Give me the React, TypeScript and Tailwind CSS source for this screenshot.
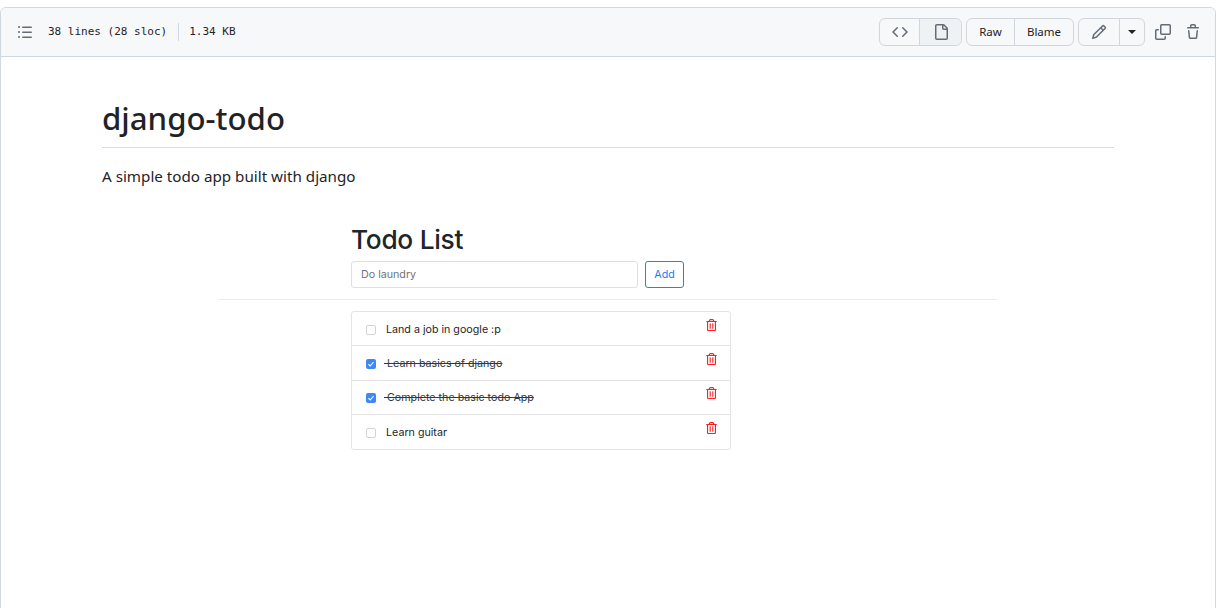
import { FaRegTrashAlt } from 'react-icons/fa';

const todos = [
  { text: 'Land a job in google :p', done: false },
  { text: 'Learn basics of django', done: true },
  { text: 'Complete the basic todo App', done: true },
  { text: 'Learn guitar', done: false },
];

function ListIcon() {
  return (
    <svg viewBox="0 0 16 16" className="h-4 w-4 fill-[#636c76]">
      <path d="M5.75 2.5h8.5a.75.75 0 0 1 0 1.5h-8.5a.75.75 0 0 1 0-1.5Zm0 5h8.5a.75.75 0 0 1 0 1.5h-8.5a.75.75 0 0 1 0-1.5Zm0 5h8.5a.75.75 0 0 1 0 1.5h-8.5a.75.75 0 0 1 0-1.5ZM2 14a1 1 0 1 1 0-2 1 1 0 0 1 0 2Zm1-6a1 1 0 1 1-2 0 1 1 0 0 1 2 0ZM2 4a1 1 0 1 1 0-2 1 1 0 0 1 0 2Z" />
    </svg>
  );
}

function CodeIcon() {
  return (
    <svg viewBox="0 0 16 16" className="h-4 w-4 fill-[#636c76]">
      <path d="m11.28 3.22 4.25 4.25a.75.75 0 0 1 0 1.06l-4.25 4.25a.749.749 0 0 1-1.06-1.06L13.94 8l-3.72-3.72a.749.749 0 0 1 1.06-1.06Zm-6.56 0a.751.751 0 0 1 1.06 1.06L2.06 8l3.72 3.72a.749.749 0 0 1-1.06 1.06L.47 8.53a.75.75 0 0 1 0-1.06Z" />
    </svg>
  );
}

function FileIcon() {
  return (
    <svg viewBox="0 0 16 16" className="h-4 w-4 fill-[#636c76]">
      <path d="M2 1.75C2 .784 2.784 0 3.75 0h6.586c.464 0 .909.184 1.237.513l2.914 2.914c.329.328.513.773.513 1.237v9.586A1.75 1.75 0 0 1 13.25 16h-9.5A1.75 1.75 0 0 1 2 14.25Zm1.75-.25a.25.25 0 0 0-.25.25v12.5c0 .138.112.25.25.25h9.5a.25.25 0 0 0 .25-.25V6h-2.75A1.75 1.75 0 0 1 9 4.25V1.5Zm6.75.062V4.25c0 .138.112.25.25.25h2.688l-.011-.013-2.914-2.914-.013-.011Z" />
    </svg>
  );
}

function PencilIcon() {
  return (
    <svg viewBox="0 0 16 16" className="h-4 w-4 fill-[#636c76]">
      <path d="M11.013 1.427a1.75 1.75 0 0 1 2.474 0l1.086 1.086a1.75 1.75 0 0 1 0 2.474l-8.61 8.61c-.21.21-.47.364-.756.445l-3.251.93a.75.75 0 0 1-.927-.928l.929-3.25c.081-.286.235-.547.445-.758l8.61-8.61Zm.176 4.823L9.75 4.81l-6.286 6.287a.253.253 0 0 0-.064.108l-.558 1.953 1.953-.558a.253.253 0 0 0 .108-.064Zm1.238-3.763a.25.25 0 0 0-.354 0L10.811 3.75l1.439 1.44 1.263-1.263a.25.25 0 0 0 0-.354Z" />
    </svg>
  );
}

function CopyIcon() {
  return (
    <svg viewBox="0 0 16 16" className="h-4 w-4 fill-[#636c76]">
      <path d="M0 6.75C0 5.784.784 5 1.75 5h1.5a.75.75 0 0 1 0 1.5h-1.5a.25.25 0 0 0-.25.25v7.5c0 .138.112.25.25.25h7.5a.25.25 0 0 0 .25-.25v-1.5a.75.75 0 0 1 1.5 0v1.5A1.75 1.75 0 0 1 9.25 16h-7.5A1.75 1.75 0 0 1 0 14.25Z" />
      <path d="M5 1.75C5 .784 5.784 0 6.75 0h7.5C15.216 0 16 .784 16 1.75v7.5A1.75 1.75 0 0 1 14.25 11h-7.5A1.75 1.75 0 0 1 5 9.25Zm1.75-.25a.25.25 0 0 0-.25.25v7.5c0 .138.112.25.25.25h7.5a.25.25 0 0 0 .25-.25v-7.5a.25.25 0 0 0-.25-.25Z" />
    </svg>
  );
}

function TrashIcon() {
  return (
    <svg viewBox="0 0 16 16" className="h-4 w-4 fill-[#636c76]">
      <path d="M11 1.75V3h2.25a.75.75 0 0 1 0 1.5H2.75a.75.75 0 0 1 0-1.5H5V1.75C5 .784 5.784 0 6.75 0h2.5C10.216 0 11 .784 11 1.75ZM4.496 6.675l.66 6.6a.25.25 0 0 0 .249.225h5.19a.25.25 0 0 0 .249-.225l.66-6.6a.75.75 0 0 1 1.492.149l-.66 6.6A1.748 1.748 0 0 1 10.595 15h-5.19a1.75 1.75 0 0 1-1.741-1.575l-.66-6.6a.75.75 0 1 1 1.492-.15ZM6.5 1.75V3h3V1.75a.25.25 0 0 0-.25-.25h-2.5a.25.25 0 0 0-.25.25Z" />
    </svg>
  );
}

function TodoRow({ text, done }: { text: string; done: boolean }) {
  return (
    <div className="flex h-[34.25px] items-center border-b border-[#e4e4e4] pl-[14px] pr-[13px] pt-[2px] last:border-b-0">
      {done ? (
        <div className="flex h-[10px] w-[10px] items-center justify-center rounded-[2px] bg-[#3f87f5]">
          <svg viewBox="0 0 10 10" className="h-[10px] w-[10px]">
            <path d="M2.4 5.2 4.2 7l3.4-4" fill="none" stroke="white" strokeWidth="1.1" />
          </svg>
        </div>
      ) : (
        <div className="h-[10px] w-[10px] rounded-[2px] border border-[#d4d4d4] bg-white" />
      )}
      <span
        className={
          done
            ? 'ml-[8px] text-[10.7px] text-[#33383d] line-through'
            : 'ml-[10px] text-[10.7px] text-[#212529]'
        }
      >
        {done ? `\u00a0${text}` : text}
      </span>
      <FaRegTrashAlt className="mb-[10px] ml-auto h-[12px] w-[11px] text-[#fa2020]" />
    </div>
  );
}

export default function App() {
  return (
    <div className="h-[608px] w-[1221px] overflow-hidden bg-white pt-[7px] font-['Noto_Sans',sans-serif] text-[#1f2328]">
      <div className="h-[640px] w-[1216px] rounded-t-md border border-[#d0d7de]">
        {/* File header */}
        <header className="flex h-[49px] items-center justify-between rounded-t-md border-b border-[#d0d7de] bg-[#f6f8fa] pl-[16px] pr-[14px]">
          <div className="flex items-center">
            <ListIcon />
            <div className="ml-[15px] flex items-center font-['DejaVu_Sans_Mono',monospace] text-[11px] text-[#1f2328]">
              <span>38 lines (28 sloc)</span>
              <span className="ml-[11px] mr-[10px] h-[18px] w-px bg-[#d0d7de]" />
              <span>1.34 KB</span>
            </div>
          </div>
          <div className="flex items-center text-[11.5px]">
            <div className="flex h-[28px] rounded-md border border-[#d0d7de]">
              <div className="flex w-[40px] items-center justify-center border-r border-[#d0d7de]">
                <CodeIcon />
              </div>
              <div className="flex w-[41px] items-center justify-center rounded-r-md bg-[#eff2f5]">
                <FileIcon />
              </div>
            </div>
            <div className="ml-[4px] flex h-[28px] rounded-md border border-[#d0d7de]">
              <div className="flex w-[48px] items-center justify-center border-r border-[#d0d7de]">Raw</div>
              <div className="flex w-[58px] items-center justify-center">Blame</div>
            </div>
            <div className="ml-[4px] flex h-[28px] rounded-md border border-[#d0d7de]">
              <div className="flex w-[41px] items-center justify-center border-r border-[#d0d7de]">
                <PencilIcon />
              </div>
              <div className="flex w-[24px] items-center justify-center">
                <span className="h-0 w-0 border-x-[4px] border-t-[4px] border-x-transparent border-t-[#1f2328]" />
              </div>
            </div>
            <div className="ml-[10px] flex w-[16px] justify-center">
              <CopyIcon />
            </div>
            <div className="ml-[14px] flex w-[16px] justify-center">
              <TrashIcon />
            </div>
          </div>
        </header>

        {/* Rendered readme */}
        <article className="px-[101px]">
          <h1 className="mt-[42px] h-[49px] border-b border-[#d8dee4] text-[31.2px] font-medium leading-[38px] text-[#1f2328]">
            django-todo
          </h1>
          <p className="mt-[16px] text-[15.2px] leading-[24px]">A simple todo app built with django</p>

          {/* Embedded screenshot */}
          <div className="ml-[116px] mt-[36px] w-[779px] font-['Inter',sans-serif]">
            <div className="border-b border-[#ececec] pb-[11px] pl-[133px]">
              <h2 className="text-[26.3px] font-medium leading-[32px] tracking-[-0.3px] text-[#212529]">Todo List</h2>
              <div className="mt-[5px] flex items-center">
                <div className="flex h-[27px] w-[287px] items-center rounded-[3px] border border-[#dbe0e5] pl-[9px] pt-[1px] text-[10.7px] text-[#6c757d]">
                  Do laundry
                </div>
                <div className="ml-[7px] flex h-[27px] w-[39px] items-center justify-center rounded-[3px] border border-[#2f7fe6] pt-[1px] text-[10.7px] text-[#1a7cf5]">
                  Add
                </div>
              </div>
            </div>
            <div className="ml-[133px] mt-[11px] w-[380px] rounded-[3px] border border-[#e4e4e4]">
              {todos.map((todo) => (
                <TodoRow key={todo.text} text={todo.text} done={todo.done} />
              ))}
            </div>
          </div>
        </article>
      </div>
    </div>
  );
}
